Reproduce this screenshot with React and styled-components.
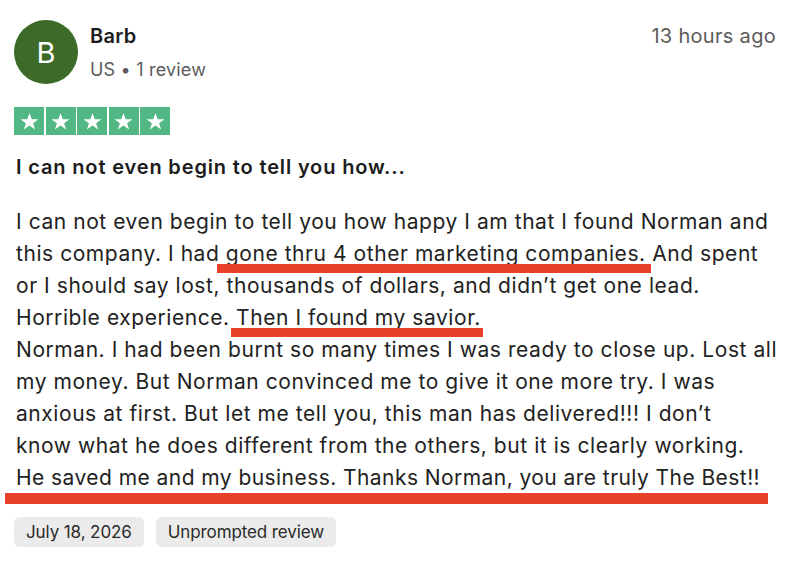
import React from 'react';
import styled, { createGlobalStyle } from 'styled-components';

const GlobalStyle = createGlobalStyle`
    html, body {
        margin: 0;
        padding: 0;
        background: #fff;
    }
    body {
        font-family: Inter, "Noto Sans", "Liberation Sans", sans-serif;
        color: #1c1c1c;
    }
`;

const CARD = styled.div`
    width: 800px;
    height: 562px;
    box-sizing: border-box;
    padding: 20px 24px 0 14px;
    overflow: hidden;
`;

const HEADER = styled.div`
    display: flex;
    align-items: flex-start;
`;

const AVATAR = styled.div`
    width: 64px;
    height: 64px;
    border-radius: 50%;
    background: #3d6a29;
    color: #fff;
    display: flex;
    align-items: center;
    justify-content: center;
    font-size: 29px;
    flex-shrink: 0;
`;

const META = styled.div`
    margin-left: 12px;
    display: flex;
    flex-direction: column;
    padding-top: 3px;
`;

const NAME = styled.div`
    font-size: 20px;
    font-weight: 600;
    line-height: 26px;
    letter-spacing: 0.3px;
`;

const SUB = styled.div`
    font-size: 18px;
    color: #5b5b5b;
    line-height: 26px;
    margin-top: 8px;
    letter-spacing: 0.2px;
`;

const TIME = styled.div`
    margin-left: auto;
    font-size: 20px;
    color: #5b5b5b;
    line-height: 26px;
    padding-top: 3px;
    letter-spacing: 0.3px;
`;

const STARS = styled.div`
    display: flex;
    gap: 1.5px;
    margin-top: 23px;
`;

const STAR = styled.div`
    width: 30px;
    height: 28px;
    background: #52b883;
    display: flex;
    align-items: center;
    justify-content: center;
`;

const TITLE = styled.h2`
    margin: 18px 0 0 2px;
    font-size: 20px;
    font-weight: 600;
    line-height: 28px;
    letter-spacing: 0.85px;
`;

const TEXT = styled.p`
    margin: 25px 0 0 2px;
    font-size: 21px;
    line-height: 32px;
    letter-spacing: 0.56px;
    white-space: nowrap;
    color: #222;
`;

const MARK = styled.span`
    position: relative;
    letter-spacing: ${props => (props.$ls != null ? `${props.$ls}px` : 'inherit')};
    &::after {
        content: '';
        position: absolute;
        left: ${props => props.$l}px;
        right: ${props => props.$r}px;
        top: calc(100% + ${props => props.$t}px);
        height: ${props => props.$h}px;
        background: #e8412a;
    }
`;

const TAGS = styled.div`
    display: flex;
    gap: 12px;
    margin-top: 23px;
`;

const TAG = styled.div`
    background: #ebebeb;
    border-radius: 6px;
    padding: 0 12px;
    height: 30px;
    display: flex;
    align-items: center;
    font-size: 17px;
    letter-spacing: -0.1px;
    color: #2a2a2a;
`;

const Star = () => (
    <svg width="21" height="21" viewBox="0 0 24 24">
        <path fill="#fff" d="M12 2.2l2.6 7.2h7.6l-6.1 4.5 2.3 7.3L12 16.7l-6.4 4.5 2.3-7.3L1.8 9.4h7.6z" />
    </svg>
);

export default function App() {
    return (
        <>
            <GlobalStyle />
            <CARD>
                <HEADER>
                    <AVATAR>B</AVATAR>
                    <META>
                        <NAME>Barb</NAME>
                        <SUB>US • 1 review</SUB>
                    </META>
                    <TIME>13 hours ago</TIME>
                </HEADER>
                <STARS>
                    {[0, 1, 2, 3, 4].map(i => (
                        <STAR key={i}>
                            <Star />
                        </STAR>
                    ))}
                </STARS>
                <TITLE>I can not even begin to tell you how...</TITLE>
                <TEXT>
                    I can not even begin to tell you how happy I am that I found Norman and
                    <br />
                    this company. I had <MARK $l={-9} $r={-5} $t={-2} $h={9}>gone thru 4 other marketing companies.</MARK> And spent
                    <br />
                    or I should say lost, thousands of dollars, and didn’t get one lead.
                    <br />
                    Horrible experience. <MARK $l={-5} $r={-2} $t={-2} $h={9}>Then I found my savior.</MARK>
                    <br />
                    Norman. I had been burnt so many times I was ready to close up. Lost all
                    <br />
                    my money. But Norman convinced me to give it one more try. I was
                    <br />
                    anxious at first. But let me tell you, this man has delivered!!! I don’t
                    <br />
                    know what he does different from the others, but it is clearly working.
                    <br />
                    <MARK $l={-11} $r={-8} $t={3} $h={11} $ls={0.44}>
                        He saved me and my business. Thanks Norman, you are truly The Best!!
                    </MARK>
                </TEXT>
                <TAGS>
                    <TAG>July 18, 2026</TAG>
                    <TAG>Unprompted review</TAG>
                </TAGS>
            </CARD>
        </>
    );
}
